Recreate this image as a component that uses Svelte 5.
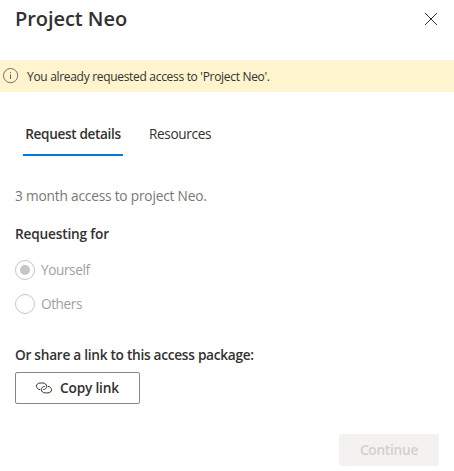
<script>
  let tabs = ['Request details', 'Resources'];
  let options = ['Yourself', 'Others'];
  let activeTab = $state('Request details');
  let selected = 'Yourself';
</script>

<main class="panel">
  <header>
    <h1>Project Neo</h1>
    <button class="close" aria-label="Close">
      <svg width="14" height="14" viewBox="0 0 14 14"><path d="M1 1L13 13M13 1L1 13" fill="none" stroke="#323130" stroke-width="1" /></svg>
    </button>
  </header>

  <div class="banner">
    <svg width="16" height="16" viewBox="0 0 16 16">
      <circle cx="7.6" cy="7.6" r="7.1" fill="none" stroke="#6b675e" stroke-width="0.95" />
      <path d="M7.5 6.5V11" stroke="#605e5c" stroke-width="1" />
      <path d="M7.5 4.2V5.3" stroke="#605e5c" stroke-width="1.1" />
    </svg>
    <span>You already requested access to 'Project Neo'.</span>
  </div>

  <nav>
    {#each tabs as tab}
      <button class="tab" class:active={tab === activeTab} onclick={() => (activeTab = tab)}><span>{tab}</span></button>
    {/each}
  </nav>

  <p class="description"><span>3 month access to project Neo.</span></p>

  <h2 class="requesting"><span>Requesting for</span></h2>
  <div class="options">
    {#each options as option}
      <div class="option">
        <i class="radio" class:checked={option === selected}></i>
        <span>{option}</span>
      </div>
    {/each}
  </div>

  <h2 class="share"><span>Or share a link to this access package:</span></h2>
  <button class="copy">
    <svg width="16" height="12" viewBox="0 0 16 12" fill="none" stroke="#323130" stroke-width="1">
      <path d="M4.3 7.7C2 7.5.5 6 .5 4.2C.5 2.2 2.1 1 4.2 1H6.8C9 1 10.6 2.4 10.6 4.3C10.6 6.2 9.1 7.6 7.2 7.6" />
      <path d="M11.7 4.3C14 4.5 15.5 6 15.5 7.7C15.5 9.7 13.9 10.9 11.8 10.9H9.2C7 10.9 5.4 9.5 5.4 7.7C5.4 5.8 6.9 4.4 8.8 4.4" />
    </svg>
    <span>Copy link</span>
  </button>

  <footer><button class="continue" disabled><span>Continue</span></button></footer>
</main>

<style>
  :global(body) { margin: 0; background: #fff; }
  .panel {
    box-sizing: border-box;
    width: 454px;
    height: 471px;
    overflow: hidden;
    display: flex;
    flex-direction: column;
    font: 13.7px/20px "Open Sans", "Noto Sans", sans-serif;
    color: #323130;
  }
  button { font: inherit; color: inherit; background: none; border: 0; padding: 0; }
  svg { display: block; flex: none; }
  h1, h2, p { margin: 0; }
  span { white-space: nowrap; }
  header { height: 60px; box-sizing: border-box; display: flex; justify-content: space-between; padding: 5px 16px 0 15px; }
  h1 { font-size: 20px; line-height: 28px; font-weight: 600; letter-spacing: -0.05px; }
  .close { height: 28px; display: flex; align-items: center; }
  .banner { height: 32px; display: flex; align-items: center; gap: 8px; padding-left: 3px; background: #fff4ce; font-size: 12px; letter-spacing: -0.31px; }
  .banner span { padding-top: 1px; }
  nav { display: flex; height: 44px; margin-top: 20px; padding-left: 23px; gap: 24px; }
  .tab { box-sizing: border-box; height: 44px; border-bottom: 2px solid transparent; padding: 2px 2px 0; font-size: 13.6px; letter-spacing: -0.34px; }
  .tab.active { width: 100px; font-weight: 600; border-color: #0078d4; }
  .description { margin: 30px 0 0 15px; color: #797775; letter-spacing: -0.19px; }
  h2 { font-size: 13.7px; font-weight: 600; margin-left: 15px; letter-spacing: -0.2px; }
  .requesting { margin-top: 18px; }
  .options { display: flex; flex-direction: column; gap: 14px; margin: 16px 0 0 15px; }
  .option { display: flex; height: 20px; gap: 6px; color: #a19f9d; font-size: 13.6px; letter-spacing: -0.4px; }
  .radio { box-sizing: border-box; width: 20px; height: 20px; border: 1px solid #c8c6c4; border-radius: 50%; display: grid; place-items: center; }
  .checked::after { content: ""; width: 10px; height: 10px; border-radius: 50%; background: #c8c6c4; }
  .share { margin-top: 31px; letter-spacing: -0.29px; }
  .copy { box-sizing: border-box; width: 125px; height: 32px; margin: 7px 0 0 15px; border: 1px solid #8a8886; border-radius: 2px; display: flex; align-items: center; padding-left: 20px; gap: 8px; font-weight: 600; letter-spacing: -0.2px; }
  footer { display: flex; justify-content: flex-end; margin: 30px 15px 0 0; }
  .continue { width: 100px; height: 32px; border-radius: 2px; background: #f3f2f1; color: #d2d0ce; font-weight: 600; letter-spacing: -0.25px; }
</style>
